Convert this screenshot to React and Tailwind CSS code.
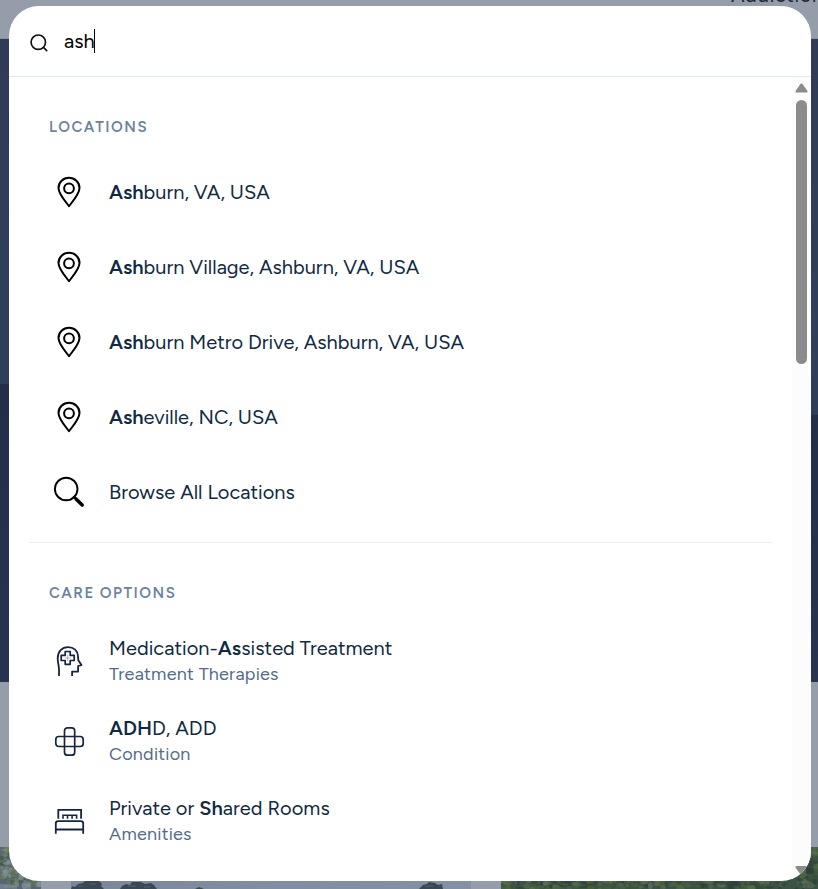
import React from "react";

const font = "font-['Figtree','Lato',sans-serif]";

// Deterministic speckles that stand for leaves in the photo cards.
function Foliage({ width, height, seed, count, colors, base }) {
  let s = seed;
  const rnd = () => {
    s = (s * 16807) % 2147483647;
    return s / 2147483647;
  };
  const leaves = [];
  for (let i = 0; i < count; i++) {
    leaves.push(
      <ellipse
        key={i}
        cx={rnd() * width}
        cy={rnd() * height}
        rx={1 + rnd() * 3.5}
        ry={1 + rnd() * 2.5}
        fill={colors[Math.floor(rnd() * colors.length)]}
        opacity={0.35 + rnd() * 0.5}
      />
    );
  }
  return (
    <svg width={width} height={height} viewBox={`0 0 ${width} ${height}`} className="block shrink-0">
      <rect width={width} height={height} fill={base} />
      {leaves}
    </svg>
  );
}

function Trees() {
  return (
    <svg width="400" height="42" viewBox="0 0 400 42" className="block shrink-0">
      <defs>
        <linearGradient id="sky">
          <stop offset="0" stopColor="#7b8799" />
          <stop offset="0.45" stopColor="#808c9f" />
          <stop offset="1" stopColor="#8490a3" />
        </linearGradient>
      </defs>
      <rect width="400" height="42" fill="url(#sky)" />
      <path d="M0 42 1 39 4 40 7 37 12 36 14 34 28 34 31 37 30 39 33 42ZM49 42 51 39 55 37 59 38 61 35 70 35 74 37 80 36 83 38 86 42ZM124 42 128 40 133 42ZM348 42 352 38 356 37 358 35 364 36 367 38 371 37 372 42Z" fill="#3a4856" />
      <path d="M7 39h5M19 37h6M57 39h8M73 40h6M354 39h8" stroke="#53616c" strokeWidth="1" />
    </svg>
  );
}

function SearchSmall() {
  return (
    <svg width="20" height="20" viewBox="0 0 20 20" fill="none" stroke="#111" strokeWidth="1.7" strokeLinecap="round">
      <circle cx="9.3" cy="9.2" r="7.2" />
      <path d="m14.6 14.5 3.1 3.1" />
    </svg>
  );
}

function Pin() {
  return (
    <svg width="32" height="32" viewBox="0 0 32 32" fill="none" stroke="#000" strokeWidth="2">
      <path d="M16 30.2C11.2 24 5.5 17.500 5.500 11.900a10.500 10.200 0 0 1 21 0C26.500 17.500 20.800 24 16 30.200Z" strokeLinejoin="round" />
      <circle cx="16" cy="12.300" r="4.900" />
    </svg>
  );
}

function SearchLarge() {
  return (
    <svg width="32" height="32" viewBox="0 0 32 32" fill="none" stroke="#000" strokeLinecap="round">
      <circle cx="13.200" cy="13" r="11.300" strokeWidth="1.900" />
      <path d="m21 21 3 3" strokeWidth="2.4" />
      <path d="m23.300 23.200 5.900 5.900" strokeWidth="3.500" />
    </svg>
  );
}

function Head() {
  return (
    <svg width="32" height="32" viewBox="0 0 32 32" fill="none" stroke="#15243f" strokeWidth="1.8">
      <path d="M6 32V25.500C6 22 4.700 19 4.700 14.500 4.700 7.500 9 3.100 15 3.100c6 0 9.700 4 10 8.900l.3 4.300 3.200 4.800-3.400.9v5.600h-6V32" strokeLinejoin="round" />
      <path d="M12.200 7.500h5v3.800h4v5.200h-4v3.800h-5v-3.800H8.200v-5.200h4Z" strokeLinejoin="round" strokeWidth="1.7" />
      <path d="M14.700 11v6M11.700 14h6" stroke="#a9adb8" strokeWidth="1" />
    </svg>
  );
}

function Cross() {
  return (
    <svg width="32" height="32" viewBox="0 0 32 32" fill="none" stroke="#15243f" strokeWidth="1.7">
      <rect x="11.500" y="3.800" width="10.200" height="27.400" rx="3" />
      <rect x="2.800" y="12.500" width="27.400" height="10" rx="3" />
    </svg>
  );
}

function Bed() {
  return (
    <svg width="32" height="32" viewBox="0 0 32 32" fill="none" stroke="#15243f" strokeWidth="1.8">
      <path d="M5.300 14.800V5.900h22.800v8.900" />
      <path d="M10 14.800v-3.600h13.600v3.600M14.500 11.200v3.600M19.100 11.200v3.600" strokeWidth="1.600" />
      <path d="M2.800 29.800V19.600q0-2.400 2.400-2.400h22.600q2.400 0 2.400 2.400v10.200M2.800 25.500h27.400" />
    </svg>
  );
}

const locations = [
  { hit: "Ash", rest: "burn, VA, USA" },
  { hit: "Ash", rest: "burn Village, Ashburn, VA, USA" },
  { hit: "Ash", rest: "burn Metro Drive, Ashburn, VA, USA" },
  { hit: "Ash", rest: "eville, NC, USA" },
];

const options = [
  { icon: <Head />, before: "Medication-", hit: "As", rest: "sisted Treatment", sub: "Treatment Therapies" },
  { icon: <Cross />, before: "", hit: "ADH", rest: "D, ADD", sub: "Condition" },
  { icon: <Bed />, before: "Private or ", hit: "Sh", rest: "ared Rooms", sub: "Amenities" },
];

function LocationRow({ icon, hit, rest }) {
  return (
    <li className="flex h-[75px] items-center gap-6 pl-6">
      {icon}
      <span className="whitespace-nowrap text-[20px] leading-[30px] text-[#102a43]">
        {hit && <b className="font-semibold">{hit}</b>}
        {rest}
      </span>
    </li>
  );
}

function Heading({ children }) {
  return <h2 className="pl-5 text-[15px] font-semibold leading-[22px] tracking-[1.5px] text-[#6b83a0]">{children}</h2>;
}

function Backdrop() {
  return (
    <div className="flex h-full flex-col overflow-hidden bg-[#969daa]">
      <div className="flex h-[39px] shrink-0 justify-end border-b border-[#8a92a0]">
        <span className="-mt-[17px] h-6 w-[87px] whitespace-nowrap text-[20px] leading-6 tracking-[0.6px] text-[#1b2333]">Addiction</span>
      </div>
      <div className="h-[345px] shrink-0 bg-gradient-to-b from-[#303c57] to-[#2f3f5b]" />
      <div className="h-[298px] shrink-0 bg-[#2f3f5b]">
        <div className="h-full bg-gradient-to-b from-[#232e49] to-[#273350] [clip-path:polygon(0_0,100%_31px,100%_100%,0_100%)]" />
      </div>
      <div className="h-[165px] shrink-0" />
      <div className="flex h-[42px] shrink-0 gap-[30px]">
        <Foliage width={41} height={42} seed={71} count={190} base="#566574" colors={["#6f8258", "#7c8992", "#45583f", "#8795a2", "#5f7550"]} />
        <Trees />
        <Foliage width={317} height={42} seed={913} count={900} base="#3c5244" colors={["#2f4539", "#47613d", "#56704a", "#2c4038", "#5f6e60", "#4f6638"]} />
      </div>
    </div>
  );
}

export default function App() {
  return (
    <div className={`relative h-[889px] w-[818px] overflow-hidden ${font}`}>
      <Backdrop />
      <div className="absolute left-[9px] top-[6px] flex h-[875px] w-[802px] flex-col overflow-hidden rounded-[30px] bg-white">
        <div className="flex h-[71px] shrink-0 items-center border-b border-[#e1e8ef] pl-5">
          <div className="mt-[3px]"><SearchSmall /></div>
          <span className="ml-[15px] text-[20px] leading-[30px] text-black">ash</span>
          <span className="-ml-px h-6 w-px bg-black" />
        </div>
        <div className="flex min-h-0 flex-1">
          <div className="flex-1 px-5">
            <section className="border-b border-[#ededed] pb-[13px] pt-[39px]">
              <Heading>LOCATIONS</Heading>
              <ul className="pt-4">
                {locations.map((l) => <LocationRow key={l.rest} icon={<Pin />} {...l} />)}
                <LocationRow icon={<SearchLarge />} rest="Browse All Locations" />
              </ul>
            </section>
            <section className="pt-[39px]">
              <Heading>CARE OPTIONS</Heading>
              <ul className="pt-4">
                {options.map((o) => (
                  <li key={o.sub} className="flex h-20 items-center gap-6 pl-6">
                    {o.icon}
                    <div className="flex flex-col whitespace-nowrap">
                      <span className="text-[20px] leading-[28px] tracking-[0.03px] text-[#102a43]">
                        {o.before}<b className="font-semibold">{o.hit}</b>{o.rest}
                      </span>
                      <span className="text-[18px] leading-6 tracking-[0.22px] text-[#546c8c]">{o.sub}</span>
                    </div>
                  </li>
                ))}
              </ul>
            </section>
          </div>
          <div className="flex w-[19px] flex-col items-center justify-between bg-[#fcfcfc] pt-[6px]">
            <div className="flex flex-col items-center gap-[7px]">
              <svg width="13" height="10" viewBox="0 0 13 10"><path d="M5.300 1.200Q6.500-.4 7.700 1.200L12.300 7.700Q13 9.500 11.500 9.500H1.500Q0 9.500.7 7.700Z" fill="#8b8b8b" /></svg>
              <div className="h-[264px] w-[11px] rounded-full bg-[#8b8b8b]" />
            </div>
            <svg width="13" height="15" viewBox="0 0 13 15"><path d="M1.500 0H11.500Q13 0 12.300 1.700L7.700 8.300Q6.500 9.800 5.300 8.300L.7 1.700Q0 0 1.500 0Z" fill="#8b8b8b" /></svg>
          </div>
        </div>
      </div>
    </div>
  );
}
